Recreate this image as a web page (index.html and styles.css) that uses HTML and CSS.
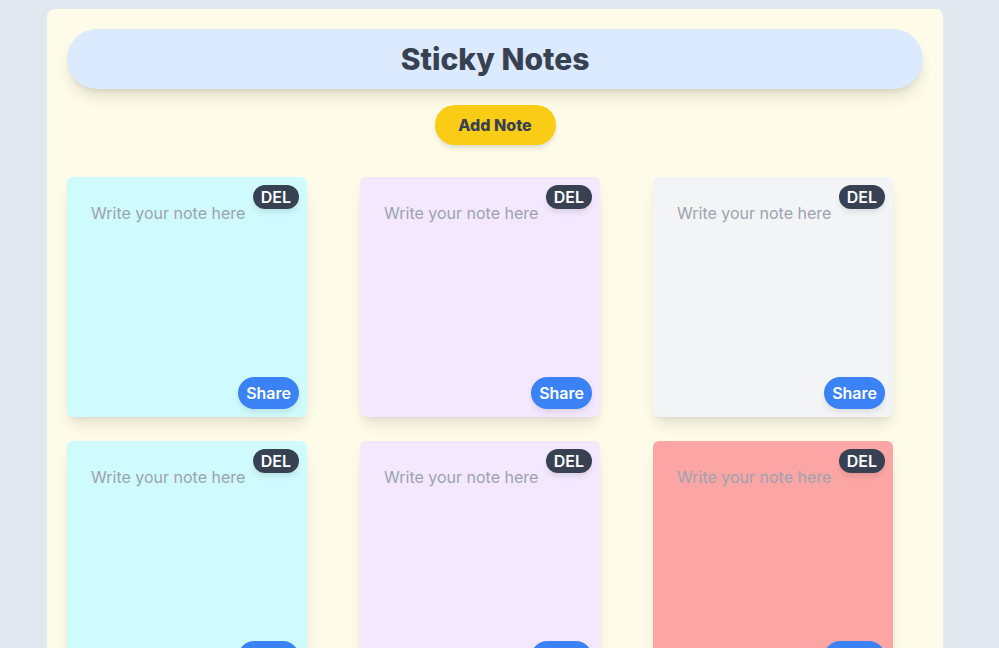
FILE: index.html
```html
<!DOCTYPE html>
<html lang="en">
<head>
<meta charset="utf-8">
<title>Sticky Notes</title>
<link rel="stylesheet" href="styles.css">
</head>
<body>
<main class="board">
  <header class="title-bar"><h1 class="title">Sticky Notes</h1></header>
  <div class="actions"><button class="add-btn">Add Note</button></div>
  <section class="notes">
    <div class="note note-cyan">
      <textarea class="note-text" placeholder="Write your note here"></textarea>
      <button class="del-btn">DEL</button>
      <button class="share-btn">Share</button>
    </div>
    <div class="note note-purple">
      <textarea class="note-text" placeholder="Write your note here"></textarea>
      <button class="del-btn">DEL</button>
      <button class="share-btn">Share</button>
    </div>
    <div class="note note-gray">
      <textarea class="note-text" placeholder="Write your note here"></textarea>
      <button class="del-btn">DEL</button>
      <button class="share-btn">Share</button>
    </div>
    <div class="note note-cyan">
      <textarea class="note-text" placeholder="Write your note here"></textarea>
      <button class="del-btn">DEL</button>
      <button class="share-btn">Share</button>
    </div>
    <div class="note note-purple">
      <textarea class="note-text" placeholder="Write your note here"></textarea>
      <button class="del-btn">DEL</button>
      <button class="share-btn">Share</button>
    </div>
    <div class="note note-red">
      <textarea class="note-text" placeholder="Write your note here"></textarea>
      <button class="del-btn">DEL</button>
      <button class="share-btn">Share</button>
    </div>
  </section>
</main>
</body>
</html>
```
FILE: styles.css
```css
* { box-sizing: border-box; }
html, body { margin: 0; }
body {
  background: #e2e8f0;
  font-family: Inter, "Noto Sans", sans-serif;
  padding: 9px 0 40px 47px;
}
.board {
  width: 896px;
  background: #fefce8;
  border-radius: 8px;
  padding: 20px 20px 40px;
}
.title-bar {
  background: #dbeafe;
  border-radius: 9999px;
  padding: 12px 0;
  box-shadow: 0 10px 15px -3px rgba(0,0,0,.12), 0 4px 6px -4px rgba(0,0,0,.12);
}
.title {
  margin: 0;
  text-align: center;
  font-size: 30px;
  line-height: 36px;
  font-weight: 800;
  color: #374151;
}
.actions {
  display: flex;
  justify-content: center;
  margin-top: 16px;
}
.add-btn {
  font-family: inherit;
  background: #facc15;
  color: #374151;
  font-weight: 800;
  font-size: 16px;
  line-height: 24px;
  border: 0;
  border-radius: 9999px;
  padding: 8px 0;
  width: 121px;
  box-shadow: 0 4px 6px -1px rgba(0,0,0,.1), 0 2px 4px -2px rgba(0,0,0,.1);
}
.notes {
  margin-top: 32px;
  display: grid;
  grid-template-columns: repeat(3, 240px);
  column-gap: 53px;
  row-gap: 24px;
}
.note {
  position: relative;
  width: 240px;
  height: 240px;
  border-radius: 6px;
  box-shadow: 0 10px 15px -3px rgba(0,0,0,.1), 0 4px 6px -4px rgba(0,0,0,.1);
}
.note-cyan { background: #cffafe; }
.note-purple { background: #f3e8ff; }
.note-gray { background: #f3f4f6; }
.note-red { background: #fca5a5; }
.note-text {
  display: block;
  width: 100%;
  height: 100%;
  padding: 24px;
  border: 0;
  background: transparent;
  resize: none;
  outline: none;
  font-family: inherit;
  font-size: 16px;
  line-height: 24px;
  color: #374151;
}
.note-text::placeholder { color: #9ca3af; }
.del-btn {
  position: absolute;
  top: 8px;
  right: 8px;
  font-family: inherit;
  background: #374151;
  color: #fff;
  font-weight: 600;
  font-size: 16px;
  line-height: 24px;
  border: 0;
  border-radius: 9999px;
  padding: 0 8px;
  box-shadow: 0 4px 6px -1px rgba(0,0,0,.1);
}
.share-btn {
  position: absolute;
  bottom: 8px;
  right: 8px;
  font-family: inherit;
  background: #3b82f6;
  color: #fff;
  font-weight: 600;
  font-size: 16px;
  line-height: 24px;
  border: 0;
  border-radius: 9999px;
  padding: 4px 8px;
  box-shadow: 0 4px 6px -1px rgba(0,0,0,.1);
}
```
